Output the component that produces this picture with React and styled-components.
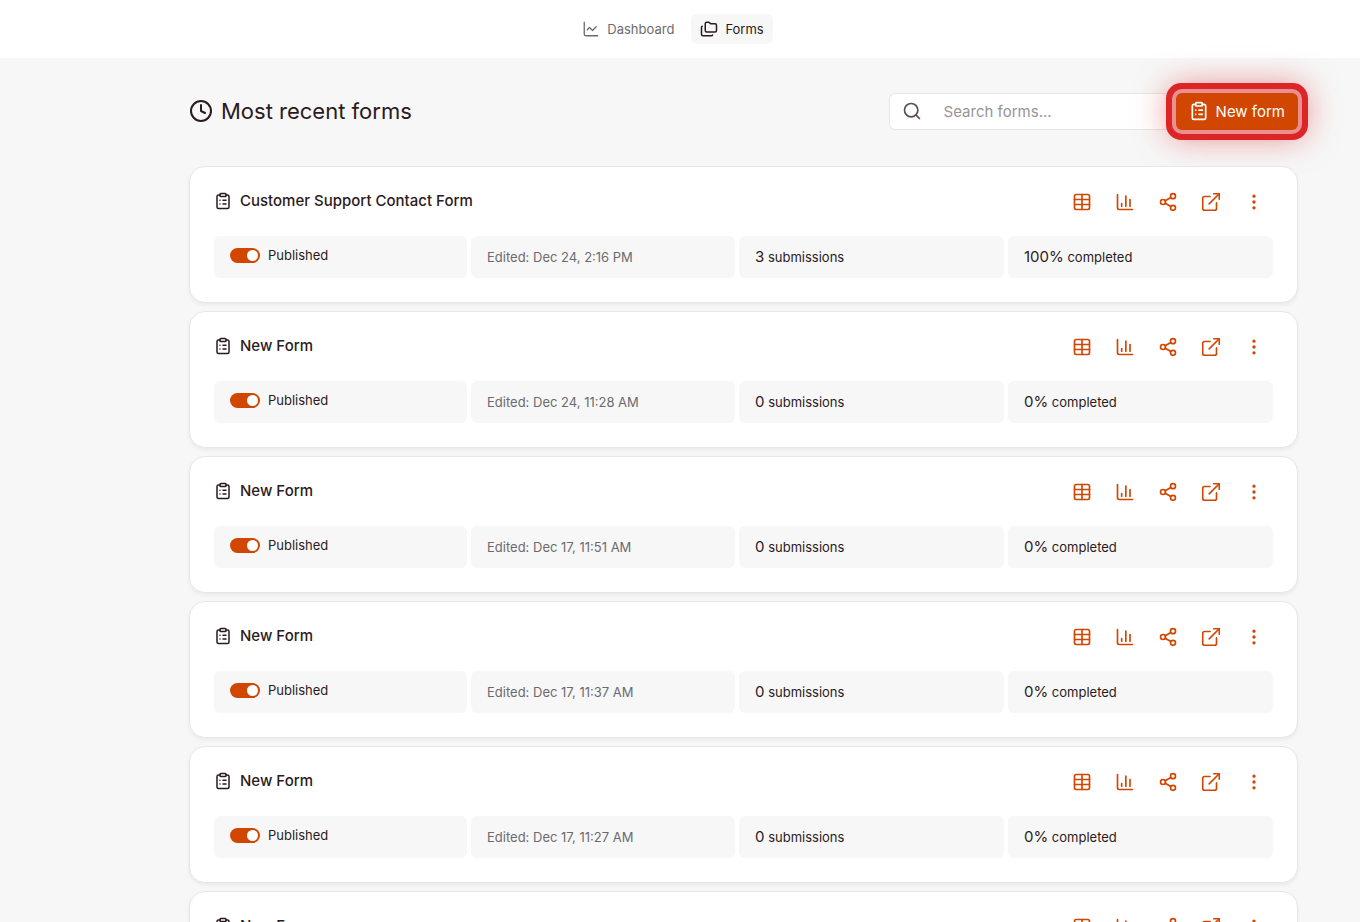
import React, { useState } from 'react';
import styled, { createGlobalStyle } from 'styled-components';
import {
    ChartColumn,
    ChartLine,
    ClipboardList,
    Clock,
    EllipsisVertical,
    ExternalLink,
    Folders,
    Search,
    Share2,
    Table,
} from 'lucide-react';

const forms = [
    { id: 1, title: 'Customer Support Contact Form', edited: 'Dec 24, 2:16 PM', submissions: 3, completed: 100 },
    { id: 2, title: 'New Form', edited: 'Dec 24, 11:28 AM', submissions: 0, completed: 0 },
    { id: 3, title: 'New Form', edited: 'Dec 17, 11:51 AM', submissions: 0, completed: 0 },
    { id: 4, title: 'New Form', edited: 'Dec 17, 11:37 AM', submissions: 0, completed: 0 },
    { id: 5, title: 'New Form', edited: 'Dec 17, 11:27 AM', submissions: 0, completed: 0 },
    { id: 6, title: 'New Form', edited: 'Dec 17, 11:20 AM', submissions: 0, completed: 0 },
];

const FormCard = ({ form }) => {
    const [published, setPublished] = useState(true);

    return (
        <Card>
            <CardHeader>
                <CardTitle>
                    <ClipboardList size={18} />
                    {form.title}
                </CardTitle>
                <Actions>
                    <IconButton aria-label="Results table"><Table size={20} /></IconButton>
                    <IconButton aria-label="Statistics"><ChartColumn size={20} /></IconButton>
                    <IconButton aria-label="Share"><Share2 size={20} /></IconButton>
                    <IconButton aria-label="Open form"><ExternalLink size={22} strokeWidth={1.75} /></IconButton>
                    <IconButton aria-label="More"><EllipsisVertical size={20} /></IconButton>
                </Actions>
            </CardHeader>
            <Stats>
                <Stat>
                    <SwitchLabel>
                        <Switch
                            type="checkbox"
                            role="switch"
                            checked={published}
                            onChange={(e) => setPublished(e.target.checked)}
                        />
                        Published
                    </SwitchLabel>
                </Stat>
                <Stat $muted>Edited: {form.edited}</Stat>
                <Stat>
                    <Count><Value>{form.submissions}</Value> submissions</Count>
                </Stat>
                <Stat>
                    <Count><Value>{form.completed}%</Value> completed</Count>
                </Stat>
            </Stats>
        </Card>
    );
};

const App = () => {
    const [query, setQuery] = useState('');
    const visible = forms.filter((form) => form.title.toLowerCase().includes(query.toLowerCase()));

    return (
        <>
            <GlobalStyle />
            <TopBar>
                <NavLink href="#dashboard">
                    <ChartLine size={18} strokeWidth={1.75} />
                    Dashboard
                </NavLink>
                <NavLink href="#forms" $active>
                    <Folders size={18} />
                    Forms
                </NavLink>
            </TopBar>
            <Main>
                <PageHeader>
                    <PageTitle>
                        <Clock size={24} />
                        Most recent forms
                    </PageTitle>
                    <Tools>
                        <SearchBox>
                            <Search size={20} />
                            <SearchInput
                                type="search"
                                aria-label="Search forms"
                                placeholder="Search forms..."
                                value={query}
                                onChange={(e) => setQuery(e.target.value)}
                            />
                        </SearchBox>
                        <NewButton>
                            <ClipboardList size={20} />
                            New form
                        </NewButton>
                    </Tools>
                </PageHeader>
                <FormList>
                    {visible.map((form) => (
                        <FormCard key={form.id} form={form} />
                    ))}
                </FormList>
            </Main>
        </>
    );
};

export default App;

const GlobalStyle = createGlobalStyle`
  * {
    box-sizing: border-box;
  }

  html {
    scrollbar-width: none;
  }

  body {
    margin: 0;
    background-color: #f7f7f7;
    color: #2b1a20;
    font-family: Inter, 'Liberation Sans', sans-serif;
    font-size: 13px;
  }

  button, input {
    font-family: inherit;
  }

  svg {
    flex-shrink: 0;
  }
`;

const TopBar = styled.nav`
  display: flex;
  justify-content: center;
  align-items: center;
  gap: 8px;
  height: 58px;
  padding-right: 14px;
  background-color: #ffffff;
`;

const NavLink = styled.a`
  display: flex;
  align-items: center;
  gap: 7px;
  height: 30px;
  padding: 0 9px;
  border-radius: 6px;
  font-size: 13px;
  text-decoration: none;
  color: ${({ $active }) => ($active ? '#2b1a20' : '#6c6a6e')};
  background-color: ${({ $active }) => ($active ? '#f7f7f7' : 'transparent')};
`;

const Main = styled.main`
  padding: 32px 62px 32px 189px;
`;

const PageHeader = styled.header`
  display: flex;
  justify-content: space-between;
  align-items: center;
  height: 42px;
  margin-bottom: 34px;
`;

const PageTitle = styled.h1`
  display: flex;
  align-items: center;
  gap: 8px;
  margin: 0;
  font-size: 22px;
  font-weight: 400;
`;

const Tools = styled.div`
  display: flex;
  align-items: center;
`;

const SearchBox = styled.label`
  display: flex;
  align-items: center;
  gap: 22px;
  width: 287px;
  height: 37px;
  padding-left: 12px;
  border: 1px solid #e6e6e6;
  border-right: none;
  border-radius: 6px 0 0 6px;
  background-color: #ffffff;
  color: #5c4b50;
`;

const SearchInput = styled.input`
  flex: 1;
  min-width: 0;
  padding: 0;
  border: none;
  outline: none;
  background: transparent;
  font-size: 15px;
  color: #2b1a20;

  &::placeholder {
    color: #9a9496;
  }
`;

const NewButton = styled.button`
  display: flex;
  align-items: center;
  gap: 7px;
  height: 37px;
  padding: 0 13px;
  border: none;
  border-radius: 6px;
  background-color: #d14600;
  color: #ffffff;
  font-size: 15px;
  box-shadow: 0 0 0 4px #ea9093, 0 0 0 10px #dc2626, 0 0 32px 8px rgba(220, 38, 38, 0.5);
`;

const FormList = styled.section`
  display: flex;
  flex-direction: column;
  gap: 8px;
`;

const Card = styled.article`
  padding: 24px;
  border: 1px solid #e6e8e8;
  border-radius: 16px;
  background-color: #ffffff;
  box-shadow: 0 2px 4px rgba(0, 0, 0, 0.06);
`;

const CardHeader = styled.div`
  display: flex;
  justify-content: space-between;
  align-items: center;
  height: 21px;
  margin-bottom: 24px;
`;

const CardTitle = styled.h2`
  display: flex;
  align-items: center;
  gap: 8px;
  margin: 0;
  padding-bottom: 2px;
  font-size: 15px;
  font-weight: 500;
`;

const Actions = styled.div`
  display: flex;
  align-items: center;
  gap: 3px;
  margin-right: -1px;
`;

const IconButton = styled.button`
  display: flex;
  justify-content: center;
  align-items: center;
  width: 40px;
  height: 32px;
  padding: 0;
  border: none;
  background: none;
  color: #d14600;
`;

const Stats = styled.div`
  display: grid;
  grid-template-columns: 253fr 264fr 265fr 265fr;
  gap: 4px;
`;

const Stat = styled.div`
  display: flex;
  align-items: center;
  height: 42px;
  padding: 0 16px;
  border-radius: 6px;
  background-color: #f7f7f7;
  color: ${({ $muted }) => ($muted ? '#6c6a6e' : '#2b1a20')};
`;

const Count = styled.div`
  padding-bottom: 2px;
`;

const Value = styled.span`
  font-size: 15px;
`;

const SwitchLabel = styled.label`
  display: flex;
  align-items: center;
  gap: 8px;
  padding-bottom: 4px;
`;

const Switch = styled.input`
  appearance: none;
  display: flex;
  align-items: center;
  justify-content: ${({ checked }) => (checked ? 'flex-end' : 'flex-start')};
  width: 30px;
  height: 15px;
  margin: 0;
  padding: 0 2px;
  border-radius: 8px;
  background-color: ${({ checked }) => (checked ? '#d14600' : '#b9b5b6')};

  &::before {
    content: '';
    width: 11px;
    height: 11px;
    border-radius: 50%;
    background-color: #ffffff;
  }
`;
